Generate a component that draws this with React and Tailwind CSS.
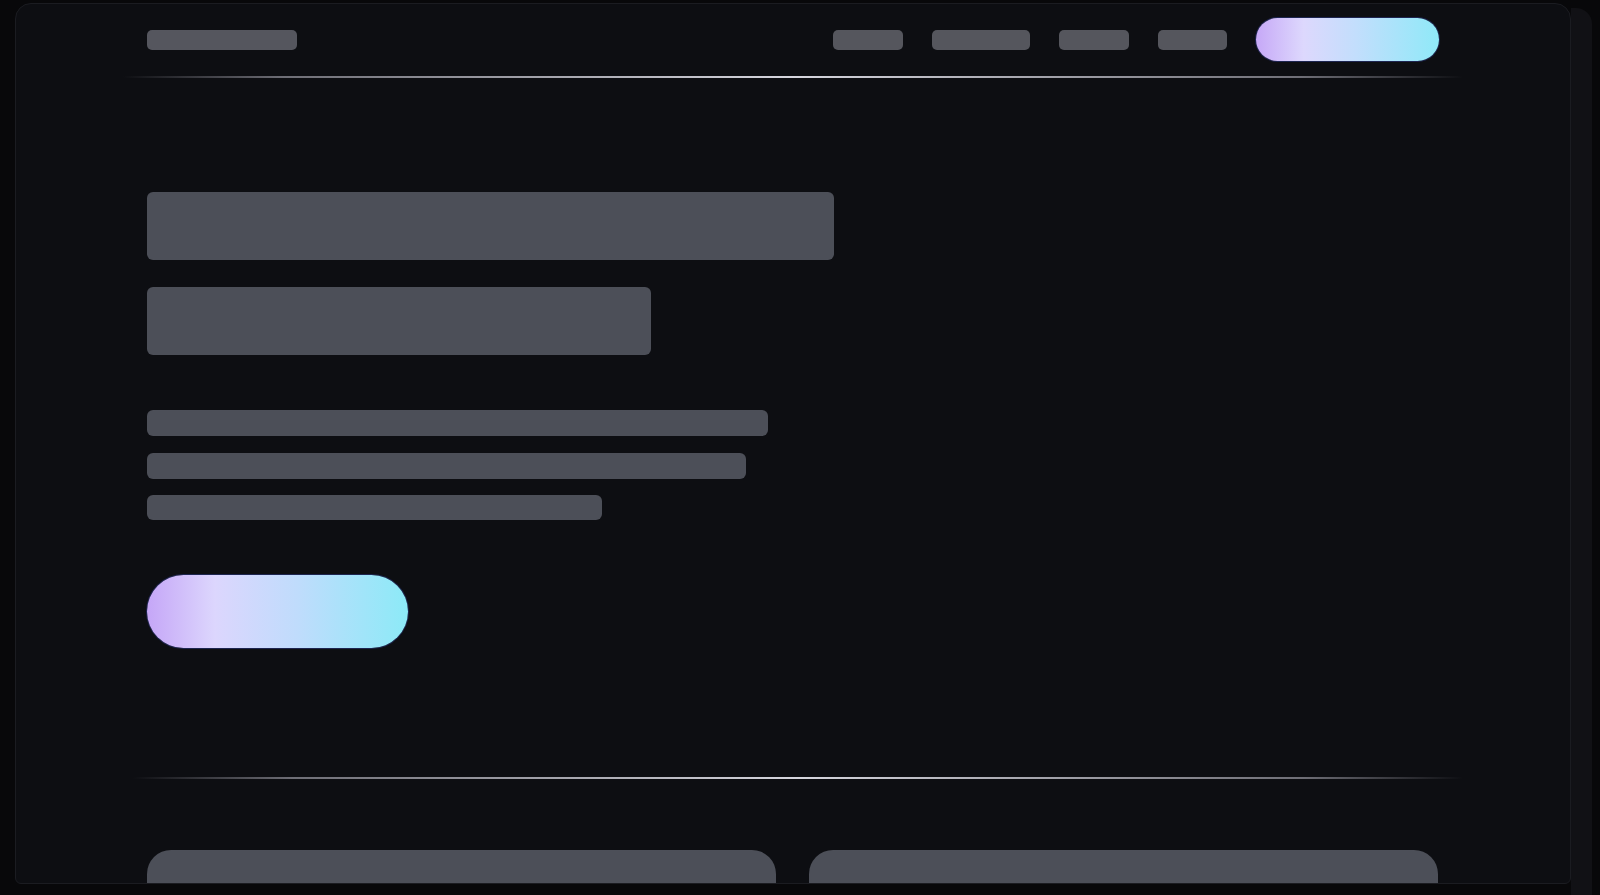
import React from "react";

// skeleton placeholder block
const Bar = ({ className = "" }) => (
  <div className={`bg-[#4c4f58] ${className}`} />
);

const Rule = ({ className = "" }) => (
  <div
    className={`h-[2px] bg-[linear-gradient(90deg,transparent,#6e6e76_12%,#d6d6de_50%,#6e6e76_88%,transparent)] ${className}`}
  />
);

const navItems = ["w-[70px]", "w-[98px]", "w-[70px]", "w-[69px]"];

const App = () => {
  return (
    <div className="w-[1600px] h-[895px] overflow-hidden bg-[#08080a] font-['Inter',sans-serif]">
      <div className="flex h-full pt-[3px]">
        {/* main panel */}
        <div className="ml-[15px] w-[1556px] h-[881px] shrink-0 overflow-hidden rounded-t-2xl rounded-b-md border border-[#1b1c21] bg-[#0d0e12] px-[131px]">
          {/* nav */}
          <div className="flex items-center justify-between pt-[14px]">
            <Bar className="h-[20px] w-[150px] rounded-[5px] bg-[#55565e]" />
            <div className="flex items-center gap-[29px]">
              {navItems.map((w, i) => (
                <Bar key={i} className={`h-[20px] ${w} rounded-[5px] bg-[#55565d]`} />
              ))}
              <button className="h-[43px] w-[183px] rounded-full bg-[linear-gradient(90deg,#c6a8f7_0%,#ddd8fd_26%,#c2defc_55%,#8fe9f8_100%)] shadow-[0_0_0_1px_#1d2550]" />
            </div>
          </div>
          <Rule className="mt-[15px] -mx-[24px]" />

          {/* hero */}
          <div className="mt-[114px] flex flex-col">
            <Bar className="h-[68px] w-[687px] rounded-md" />
            <Bar className="mt-[27px] h-[68px] w-[504px] rounded-md" />
            <Bar className="mt-[55px] h-[26px] w-[621px] rounded-md" />
            <Bar className="mt-[17px] h-[26px] w-[599px] rounded-md" />
            <Bar className="mt-[16px] h-[25px] w-[455px] rounded-md" />
            <button className="mt-[55px] h-[73px] w-[261px] rounded-full bg-[linear-gradient(90deg,#c5a6f7_0%,#dcd6fd_26%,#bfdcfc_58%,#8ceaf7_100%)] shadow-[0_0_0_1px_#1d2550]" />
          </div>

          <Rule className="mt-[129px] -ml-[14px] -mr-[24px]" />

          {/* cards */}
          <div className="mt-[71px] grid grid-cols-2 gap-[33px] pr-[1px]">
            <Bar className="h-[100px] rounded-t-[24px]" />
            <Bar className="h-[100px] rounded-t-[24px]" />
          </div>
        </div>
        {/* right bezel */}
        <div className="mt-[5px] h-full w-[21px] rounded-tr-2xl bg-[#111115]" />
      </div>
    </div>
  );
};

export default App;
